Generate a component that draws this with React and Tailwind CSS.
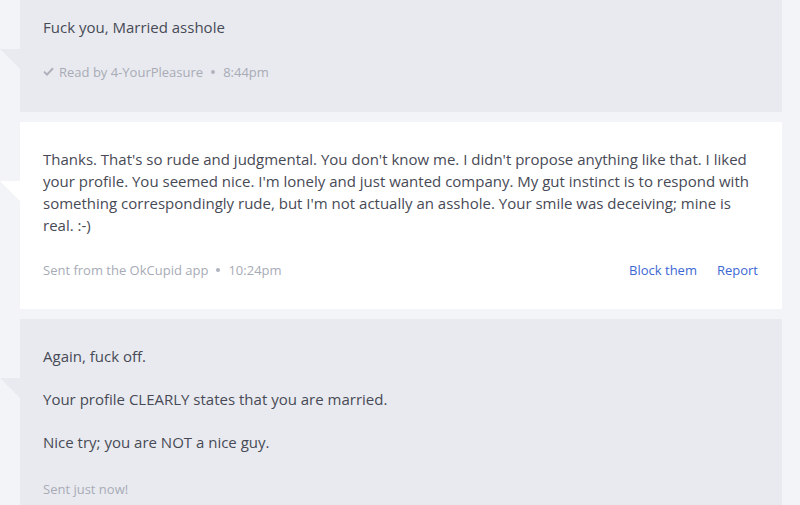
import React from 'react';

const FONT = { fontFamily: "'Open Sans', 'Noto Sans', sans-serif" };

function Tail({ color }) {
  return (
    <div className={`absolute top-[59px] -left-[20px] w-0 h-0 border-t-[20px] border-l-[20px] border-l-transparent ${color}`} />
  );
}

function Check() {
  return (
    <svg width="11" height="9" viewBox="0 0 11 9" className="inline-block mr-[5px] -mt-[1px]">
      <path d="M1 4.6 L4 7.6 L10 1.2" fill="none" stroke="#aeb1bb" strokeWidth="2" />
    </svg>
  );
}

function Meta({ children }) {
  return <div className="text-[13px] leading-5 text-[#a8abb6] flex items-center">{children}</div>;
}

function Dot() {
  return <span className="mx-[8px] w-[4px] h-[4px] rounded-full bg-[#b0b3bd]" />;
}

export default function App() {
  return (
    <div className="w-[800px] h-[505px] overflow-hidden bg-[#f3f4f8]" style={FONT}>
      <div className="-mt-[10px] pl-5 pr-[18px] flex flex-col gap-[10px]">
        <div className="relative bg-[#e9eaef] pt-[26px] pb-[30px] px-[23px]">
          <Tail color="border-t-[#e9eaef]" />
          <p className="text-[15px] leading-[22px] text-[#474a56]">Fuck you, Married asshole</p>
          <div className="mt-6">
            <Meta><Check />Read by 4-YourPleasure<Dot />8:44pm</Meta>
          </div>
        </div>

        <div className="relative bg-white pt-[26px] pb-[29px] pl-[23px] pr-6">
          <Tail color="border-t-white" />
          <p className="text-[15px] leading-[22px] text-[#474a56]">
            Thanks. That's so rude and judgmental. You don't know me. I didn't propose anything like that. I liked your profile. You seemed nice. I'm lonely and just wanted company. My gut instinct is to respond with something correspondingly rude, but I'm not actually an asshole. Your smile was deceiving; mine is real. :-)
          </p>
          <div className="mt-6 flex justify-between">
            <Meta>Sent from the OkCupid app<Dot />10:24pm</Meta>
            <div className="flex gap-5 text-[13px] leading-5 text-[#3d68d4]">
              <a>Block them</a>
              <a>Report</a>
            </div>
          </div>
        </div>

        <div className="relative bg-[#e9eaef] pt-[26px] pb-[30px] px-[23px]">
          <Tail color="border-t-[#e9eaef]" />
          <div className="flex flex-col gap-[21px] text-[15px] leading-[22px] text-[#474a56]">
            <p>Again, fuck off.</p>
            <p>Your profile CLEARLY states that you are married.</p>
            <p>Nice try; you are NOT a nice guy.</p>
          </div>
          <div className="mt-[26px]">
            <Meta>Sent just now!</Meta>
          </div>
        </div>
      </div>
    </div>
  );
}
